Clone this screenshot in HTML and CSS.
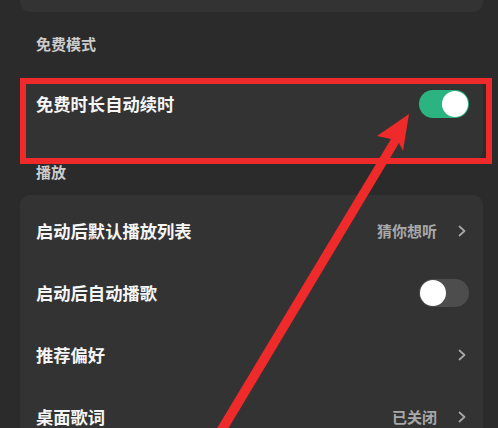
FILE: index.html
```html
<!DOCTYPE html>
<html lang="zh-CN">
<head>
<meta charset="utf-8">
<title>设置</title>
<link rel="stylesheet" href="styles.css">
</head>
<body>
<div class="page">
  <div class="card card-top"></div>

  <div class="section-title first">免费模式</div>
  <div class="card card-free">
    <div class="row">
      <span class="label">免费时长自动续时</span>
      <span class="toggle on"><span class="knob"></span></span>
    </div>
  </div>

  <div class="section-title second">播放</div>
  <div class="card card-play">
    <div class="row">
      <span class="label">启动后默认播放列表</span>
      <span class="right"><span class="value">猜你想听</span><svg class="chev" width="12" height="12" viewBox="0 0 12 12"><path d="M2.5 1.5 L7.5 6 L2.5 10.5" /></svg></span>
    </div>
    <div class="row">
      <span class="label">启动后自动播歌</span>
      <span class="toggle"><span class="knob"></span></span>
    </div>
    <div class="row">
      <span class="label">推荐偏好</span>
      <span class="right"><svg class="chev" width="12" height="12" viewBox="0 0 12 12"><path d="M2.5 1.5 L7.5 6 L2.5 10.5" /></svg></span>
    </div>
    <div class="row">
      <span class="label">桌面歌词</span>
      <span class="right"><span class="value">已关闭</span><svg class="chev" width="12" height="12" viewBox="0 0 12 12"><path d="M2.5 1.5 L7.5 6 L2.5 10.5" /></svg></span>
    </div>
  </div>

  <div class="highlight"></div>
  <svg class="arrow" width="498" height="428" viewBox="0 0 498 428">
    <polygon points="409,114 377,136 391,139 216,430 225,434 399,143 403,151" />
  </svg>
</div>
</body>
</html>
```

FILE: styles.css
```css
html, body {
  margin: 0;
  padding: 0;
  background: #2b2b2b;
}
body {
  font-family: "Noto Sans CJK SC", "Noto Sans", sans-serif;
  overflow: hidden;
}
.page {
  position: relative;
  width: 498px;
  height: 428px;
  overflow: hidden;
}
.card {
  background: #333333;
  margin-left: 20px;
  width: 463px;
  border-radius: 10px;
}
.card-top {
  height: 12px;
  border-radius: 0 0 10px 10px;
}
.section-title {
  color: #cccccc;
  font-size: 15px;
  font-weight: 600;
  line-height: 22px;
  padding-left: 36px;
}
.section-title.first {
  margin-top: 21px;
  margin-bottom: 23px;
}
.section-title.second {
  margin-top: 1px;
  margin-bottom: 12px;
}
.card-free {
  height: 82px;
}
.card-free .row {
  height: 52px;
}
.card-play {
  padding-top: 5px;
  height: 300px;
}
.row {
  height: 62px;
  display: flex;
  align-items: center;
  justify-content: space-between;
  padding-left: 16px;
  padding-right: 14px;
  box-sizing: border-box;
}
.label {
  color: #f5f5f5;
  font-size: 17.3px;
  font-weight: 700;
  line-height: 24px;
}
.right {
  display: flex;
  align-items: center;
}
.value {
  color: #a8a8a8;
  font-size: 15px;
  font-weight: 600;
  line-height: 22px;
  margin-right: 20px;
}
.chev path {
  fill: none;
  stroke: #a8a8a8;
  stroke-width: 1.7;
  stroke-linecap: round;
  stroke-linejoin: round;
}
.toggle {
  position: relative;
  width: 50px;
  height: 28px;
  border-radius: 14px;
  background: #4d4d4d;
  display: block;
}
.toggle.on {
  background: #2bb381;
}
.toggle .knob {
  position: absolute;
  top: 1px;
  left: 1px;
  width: 26px;
  height: 26px;
  border-radius: 50%;
  background: #ffffff;
}
.toggle.on .knob {
  left: auto;
  right: 1px;
}
.highlight {
  position: absolute;
  left: 20px;
  top: 78px;
  width: 472px;
  height: 86px;
  box-sizing: border-box;
  border: 6px solid #ee2a2a;
  pointer-events: none;
}
.arrow {
  position: absolute;
  left: 0;
  top: 0;
  pointer-events: none;
}
.arrow polygon {
  fill: #ee2a2a;
}
```
